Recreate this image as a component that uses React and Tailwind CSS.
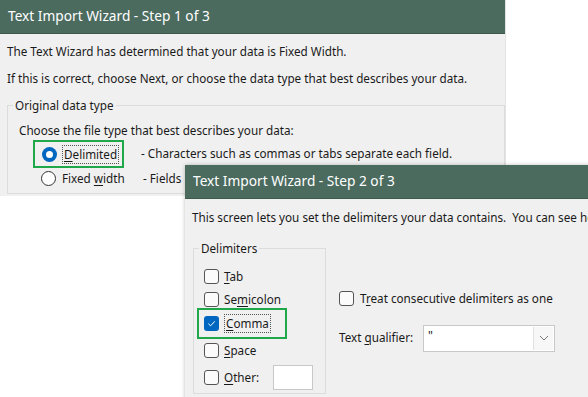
import React from 'react';

const font = { fontFamily: '"Noto Sans", "Open Sans", sans-serif' };

const U = ({ children }) => <span className="underline underline-offset-2 decoration-1">{children}</span>;

const Radio = ({ checked }) =>
  checked ? (
    <span className="w-[15px] h-[15px] rounded-full bg-[#0067c0] flex items-center justify-center shrink-0">
      <span className="w-[7px] h-[7px] rounded-full bg-white" />
    </span>
  ) : (
    <span className="w-[15px] h-[15px] rounded-full border border-[#333] bg-white shrink-0" />
  );

const Check = ({ checked }) =>
  checked ? (
    <span className="w-[15px] h-[15px] rounded-[3px] bg-[#0067c0] flex items-center justify-center shrink-0">
      <svg width="9" height="9" viewBox="0 0 10 10" fill="none">
        <path d="M1.5 5.2 L4 7.6 L8.6 2.6" stroke="white" strokeWidth="1.1" />
      </svg>
    </span>
  ) : (
    <span className="w-[15px] h-[15px] rounded-[3px] border border-[#555] bg-[#fbfbfb] shrink-0" />
  );

const TitleBar = ({ children }) => (
  <div className="h-[34px] bg-[#4b6b5f] border-b border-[#3d5a4f] text-white text-[13.7px] flex items-center pl-[8px]">
    {children}
  </div>
);

export default function App() {
  return (
    <div className="relative w-[588px] h-[397px] bg-white overflow-hidden text-[#1a1a1a]" style={font}>
      {/* Step 1 window */}
      <div className="absolute left-0 top-0 w-[506px] h-[196px] bg-[#f0f0f0] border-r border-[#e4e4e4] flex flex-col">
        <TitleBar>Text Import Wizard - Step 1 of 3</TitleBar>
        <div className="text-[11.7px] leading-none pl-[7px] pt-[9px]">
          <div className="h-[18px] flex items-center">The Text Wizard has determined that your data is Fixed Width.</div>
          <div className="h-[18px] mt-[9px] flex items-center">If this is correct, choose Next, or choose the data type that best describes your data.</div>
        </div>
        <div className="relative ml-[7px] mt-[17px] mr-0 border border-[#dcdcdc] flex-1 mb-[2px]">
          <span className="absolute -top-[10px] left-[5px] bg-[#f0f0f0] px-[2px] text-[11.7px] leading-[18px]">Original data type</span>
          <div className="text-[11.7px] pl-[11px] pt-[16px]">
            <div className="h-[18px] flex items-center">Choose the file type that best describes your data:</div>
            <div className="flex items-center h-[28px]">
              <div className="flex items-center gap-[5px] border-2 border-[#1ea84a] h-[28px] w-[91px] ml-[14px] pl-[7px]">
                <Radio checked />
                <span className="border border-dotted border-[#555] px-[1px] leading-[17px]"><U>D</U>elimited</span>
              </div>
              <span className="ml-[17px]">- Characters such as commas or tabs separate each field.</span>
            </div>
            <div className="flex items-center h-[22px]">
              <div className="flex items-center gap-[6px] w-[124px] pl-[22px]">
                <Radio />
                <span>Fixed <U>w</U>idth</span>
              </div>
              <span>- Fields</span>
            </div>
          </div>
        </div>
      </div>

      {/* Step 2 window */}
      <div className="absolute left-[185px] top-[165px] w-[410px] h-[240px] bg-[#f0f0f0] shadow-[0_0_4px_rgba(0,0,0,0.25)] flex flex-col">
        <TitleBar>Text Import Wizard - Step 2 of 3</TitleBar>
        <div className="text-[11.7px] pl-[7px] pt-[10px] whitespace-nowrap overflow-hidden">
          This screen lets you set the delimiters your data contains.&nbsp; You can see how your text is affected in the preview below.
        </div>
        <div className="flex mt-[21px] text-[11.7px]">
          <div className="relative ml-[8px] w-[133px] h-[146px] border border-[#dcdcdc]">
            <span className="absolute -top-[10px] left-[5px] bg-[#f0f0f0] px-[2px] leading-[18px]">Delimiters</span>
            <div className="flex flex-col pt-[16px] pl-[10px]">
              <div className="flex items-center gap-[5px] h-[24px]"><Check /><span><U>T</U>ab</span></div>
              <div className="flex items-center gap-[5px] h-[22px]"><Check /><span>Se<U>m</U>icolon</span></div>
              <div className="flex items-center gap-[5px] h-[31px] -mt-[3px] -ml-[7px] w-[90px] pl-[5px] border-2 border-[#1ea84a]">
                <Check checked />
                <span className="border border-dotted border-[#555] px-[1px] leading-[17px]"><U>C</U>omma</span>
              </div>
              <div className="flex items-center gap-[5px] h-[24px]"><Check /><span><U>S</U>pace</span></div>
              <div className="flex items-center gap-[5px] h-[30px]">
                <Check /><span><U>O</U>ther:</span>
                <span className="ml-[9px] w-[40px] h-[25px] bg-white border border-[#c8c8c8]" />
              </div>
            </div>
          </div>
          <div className="ml-[13px] pt-[41px]">
            <div className="flex items-center gap-[6px] h-[20px]"><Check /><span>T<U>r</U>eat consecutive delimiters as one</span></div>
            <div className="flex items-center mt-[16px]">
              <span className="w-[84px]">Text <U>q</U>ualifier:</span>
              <div className="w-[132px] h-[27px] bg-white border border-[#c8c8c8] flex items-stretch">
                <span className="flex-1 pl-[4px] leading-[20px] text-[12px]">"</span>
                <span className="w-[20px] border-l border-[#e0e0e0] bg-[#f7f7f7] flex items-center justify-center m-[1px]">
                  <svg width="10" height="6" viewBox="0 0 10 6" fill="none">
                    <path d="M1 1 L5 5 L9 1" stroke="#777" strokeWidth="1" />
                  </svg>
                </span>
              </div>
            </div>
          </div>
        </div>
      </div>
    </div>
  );
}
